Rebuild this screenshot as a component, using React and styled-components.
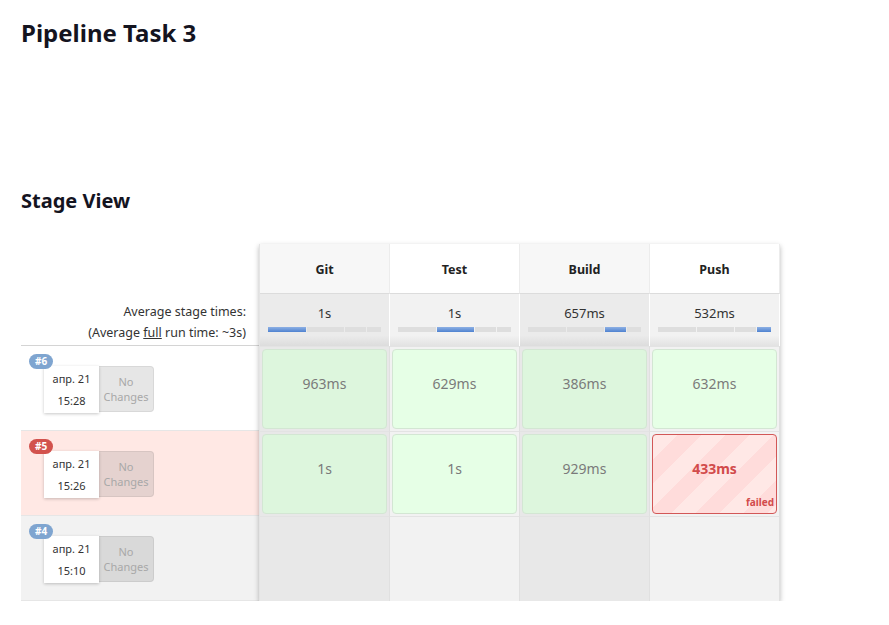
import React from 'react';
import styled, { createGlobalStyle } from 'styled-components';

const GlobalStyle = createGlobalStyle`
  body {
    margin: 0;
    background: #fff;
    font-family: 'Noto Sans', 'Open Sans', sans-serif;
    color: #333;
  }
`;

const Page = styled.div`
  padding: 0 21px;
`;

const Title = styled.h1`
  margin: 17px 0 0;
  font-size: 24px;
  line-height: 32px;
  font-weight: 700;
  color: #14141f;
`;

const SectionTitle = styled.h2`
  margin: 138px 0 0;
  font-size: 20px;
  line-height: 28px;
  font-weight: 700;
  color: #14141f;
`;

const Table = styled.div`
  display: flex;
  margin-top: 29px;
`;

const LeftCol = styled.div`
  width: 238px;
  display: flex;
  flex-direction: column;
`;

const HeadSpacer = styled.div`
  height: 50px;
`;

const AvgLabel = styled.div`
  height: 52px;
  border-bottom: 1px solid #d4d4d4;
  display: flex;
  flex-direction: column;
  align-items: flex-end;
  justify-content: center;
  padding: 5px 13px 0 0;
  box-sizing: border-box;
  font-size: 12.5px;
  line-height: 21px;
  color: #333;

  u {
    text-decoration: underline;
  }
`;

const BuildRow = styled.div`
  height: 85px;
  border-bottom: 1px solid #e6e6e6;
  background: ${(p) => p.$bg};
  padding: 20px 0 0 23px;
  box-sizing: border-box;
`;

const BuildCard = styled.div`
  position: relative;
  display: flex;
  width: 110px;
`;

const Badge = styled.span`
  position: absolute;
  left: -15px;
  top: -12px;
  padding: 0 6px;
  height: 15px;
  line-height: 15px;
  border-radius: 8px;
  background: ${(p) => p.$tone};
  color: #fff;
  font-size: 10px;
  font-weight: 700;
  z-index: 2;
`;

const DateBox = styled.div`
  width: 55px;
  height: 47px;
  background: #fff;
  box-shadow: 0 1px 3px rgba(0, 0, 0, 0.22);
  display: flex;
  flex-direction: column;
  align-items: center;
  justify-content: center;
  font-size: 11px;
  line-height: 22px;
  color: #333;
  position: relative;
  z-index: 1;
`;

const Changes = styled.div`
  width: 55px;
  height: 46px;
  background: ${(p) => p.$bg};
  border: 1px solid rgba(0, 0, 0, 0.06);
  border-left: none;
  border-radius: 0 4px 4px 0;
  box-sizing: border-box;
  display: flex;
  flex-direction: column;
  align-items: center;
  justify-content: center;
  font-size: 11px;
  line-height: 15px;
  color: #a8a8a8;
`;

const StageGrid = styled.div`
  display: grid;
  grid-template-columns: repeat(4, 130px);
  grid-template-rows: 50px 52px 85px 85px 85px;
  box-shadow: 0 2px 5px rgba(0, 0, 0, 0.28);
  border-left: 1px solid #e4e4e4;
  align-self: flex-start;
`;

const HeadCell = styled.div`
  background: ${(p) => (p.$alt ? '#f7f7f7' : '#fff')};
  border-bottom: 1px solid #dcdcdc;
  border-right: 1px solid #ececec;
  display: flex;
  align-items: center;
  justify-content: center;
  padding-top: 2px;
  font-size: 12.5px;
  font-weight: 700;
  color: #222;
`;

const AvgCell = styled.div`
  background: ${(p) =>
    p.$alt
      ? 'linear-gradient(#ebebeb 0, #ebebeb 80%, #dcdcdc 100%)'
      : 'linear-gradient(#f2f2f2 0, #f2f2f2 80%, #e2e2e2 100%)'};
  border-right: 1px solid #fff;
  display: flex;
  flex-direction: column;
  align-items: center;
  padding-top: 10px;
  box-sizing: border-box;
  font-size: 13px;
  color: #333;
`;

const Bar = styled.div`
  margin-top: 5px;
  width: 113px;
  height: 5px;
  display: flex;
  gap: 1px;
`;

const Segment = styled.div`
  height: 100%;
  background: ${(p) => (p.$on ? 'linear-gradient(#8db0e4, #4f82d0)' : '#dedede')};
`;

const RunCell = styled.div`
  background: ${(p) => (p.$alt ? '#e8e8e8' : '#f2f2f2')};
  border-right: 1px solid #e0e0e0;
  border-top: 1px solid #e3e3e3;
  padding: 2px;
  box-sizing: border-box;
  display: flex;
`;

const StageBox = styled.div`
  flex: 1;
  border-radius: 4px;
  border: 1px solid ${(p) => (p.$failed ? '#d25757' : '#d3e6d3')};
  background: ${(p) =>
    p.$failed
      ? 'repeating-linear-gradient(135deg, #ffe8e6 0 17px, #ffdcdb 17px 34px)'
      : p.$alt
        ? '#ddf6dd'
        : '#e6ffe6'};
  position: relative;
  display: flex;
  align-items: center;
  justify-content: center;
  padding-bottom: 12px;
  box-sizing: border-box;
  font-size: 14px;
  font-weight: ${(p) => (p.$failed ? 700 : 400)};
  color: ${(p) => (p.$failed ? '#d24b4b' : '#7a7a7a')};
`;

const FailedTag = styled.span`
  position: absolute;
  right: 2px;
  bottom: 4px;
  font-size: 10px;
  font-weight: 700;
  color: #d24b4b;
`;

const stages = [
  { name: 'Git', avg: '1s', seg: 0 },
  { name: 'Test', avg: '1s', seg: 1 },
  { name: 'Build', avg: '657ms', seg: 2 },
  { name: 'Push', avg: '532ms', seg: 3 },
];

const segWidths = [38, 37, 21, 14];

const builds = [
  {
    id: '#6', time: '15:28', badge: '#7fa5d0', rowBg: '#fff', chBg: '#e6e6e6',
    runs: ['963ms', '629ms', '386ms', '632ms'],
  },
  {
    id: '#5', time: '15:26', badge: '#d2524d', rowBg: '#ffe8e4', chBg: '#e5d2cf',
    runs: ['1s', '1s', '929ms', '433ms'], failed: 3,
  },
  {
    id: '#4', time: '15:10', badge: '#7fa5d0', rowBg: '#f2f2f2', chBg: '#d9d9d9',
    runs: null,
  },
];

export default function App() {
  return (
    <Page>
      <GlobalStyle />
      <Title>Pipeline Task 3</Title>
      <SectionTitle>Stage View</SectionTitle>
      <Table>
        <LeftCol>
          <HeadSpacer />
          <AvgLabel>
            <span>Average stage times:</span>
            <span>(Average <u>full</u> run time: ~3s)</span>
          </AvgLabel>
          {builds.map((b) => (
            <BuildRow key={b.id} $bg={b.rowBg}>
              <BuildCard>
                <Badge $tone={b.badge}>{b.id}</Badge>
                <DateBox>
                  <span>апр. 21</span>
                  <span>{b.time}</span>
                </DateBox>
                <Changes $bg={b.chBg}>
                  <span>No</span>
                  <span>Changes</span>
                </Changes>
              </BuildCard>
            </BuildRow>
          ))}
        </LeftCol>
        <StageGrid>
          {stages.map((s, i) => (
            <HeadCell key={s.name} $alt={i % 2 === 0}>{s.name}</HeadCell>
          ))}
          {stages.map((s, i) => (
            <AvgCell key={s.name} $alt={i % 2 === 0}>
              <span>{s.avg}</span>
              <Bar>
                {segWidths.map((w, j) => (
                  <Segment key={j} $on={j === s.seg} style={{ width: w }} />
                ))}
              </Bar>
            </AvgCell>
          ))}
          {builds.map((b) =>
            stages.map((s, i) => (
              <RunCell key={b.id + s.name} $alt={i % 2 === 0}>
                {b.runs && (
                  <StageBox $alt={i % 2 === 0} $failed={b.failed === i}>
                    {b.runs[i]}
                    {b.failed === i && <FailedTag>failed</FailedTag>}
                  </StageBox>
                )}
              </RunCell>
            ))
          )}
        </StageGrid>
      </Table>
    </Page>
  );
}
